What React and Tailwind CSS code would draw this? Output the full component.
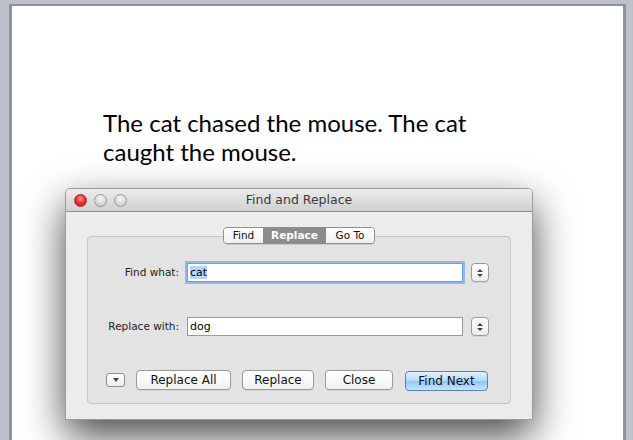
import React from 'react'

const ui = { fontFamily: '"DejaVu Sans", "Liberation Sans", sans-serif' }

function TrafficLight({ red }) {
  return (
    <span
      className={`block h-[13px] w-[13px] rounded-full border ${
        red
          ? 'border-[#b0262a] bg-[radial-gradient(circle_at_50%_35%,#ff9a9a_0%,#f0313a_45%,#c2151c_100%)]'
          : 'border-[#9a9a9a] bg-[radial-gradient(circle_at_50%_35%,#f6f6f6_0%,#d9d9d9_55%,#bdbdbd_100%)]'
      }`}
    />
  )
}

function Stepper() {
  return (
    <button className="flex h-[19px] w-[18px] flex-col items-center justify-center gap-[2px] rounded-[4px] border border-[#9c9c9c] bg-gradient-to-b from-white to-[#ededed] shadow-[0_1px_0_rgba(0,0,0,0.08)]">
      <svg width="6" height="3" viewBox="0 0 6 3"><path d="M0 3 L3 0 L6 3 Z" fill="#444" /></svg>
      <svg width="6" height="3" viewBox="0 0 6 3"><path d="M0 0 L3 3 L6 0 Z" fill="#444" /></svg>
    </button>
  )
}

function PushButton({ children, w, primary }) {
  return (
    <button
      style={ui}
      className={`h-[20px] rounded-[4px] border text-[12px] leading-none text-[#111] ${w} ${
        primary
          ? 'border-[#5b7fb8] bg-[linear-gradient(#e3f1fd_0%,#b3d9fb_50%,#8cc7f7_51%,#c6e6fe_100%)]'
          : 'border-[#9a9a9a] bg-gradient-to-b from-white to-[#f1f1f1] shadow-[0_1px_0_rgba(0,0,0,0.06)]'
      }`}
    >
      {children}
    </button>
  )
}

export default function App() {
  return (
    <div className="relative h-[440px] w-[633px] overflow-hidden bg-[#bcc1cc] pl-[9px] pt-[4px]">
      {/* document page */}
      <div className="h-full w-[617px] border-l-[3px] border-r-[3px] border-t-[2px] border-[#8e939c] bg-white pl-[91px] pt-[102px]">
        <p
          className="w-[400px] text-[24px] leading-[29px] text-black"
          style={{ fontFamily: 'Lato, "Open Sans", sans-serif' }}
        >
          The cat chased the mouse. The cat caught the mouse.
        </p>
      </div>

      {/* Find and Replace window */}
      <div
        style={ui}
        className="absolute left-[65px] top-[188px] flex h-[232px] w-[468px] flex-col overflow-hidden rounded-t-[5px] border border-[#9b9b9b] bg-[#ececec] shadow-[0_16px_40px_rgba(0,0,0,0.72)]"
      >
        <div className="relative flex h-[23px] shrink-0 items-center border-b border-[#8f8f8f] bg-gradient-to-b from-[#ececec] to-[#d0d0d0] px-[8px]">
          <div className="flex gap-[7px]">
            <TrafficLight red />
            <TrafficLight />
            <TrafficLight />
          </div>
          <span className="absolute inset-x-0 text-center text-[12.5px] text-[#3a3a3a]">Find and Replace</span>
        </div>

        <div className="flex flex-1 flex-col px-[21px] pt-[15px]">
          <div className="relative z-10 flex self-center overflow-hidden rounded-[4px] border border-[#8e8e8e] text-[10.5px] leading-none shadow-[0_1px_0_rgba(0,0,0,0.1)]">
            <span className="flex h-[15px] w-[39px] items-center justify-center bg-gradient-to-b from-white to-[#f0f0f0] text-[#111]">Find</span>
            <span className="flex h-[15px] w-[63px] items-center justify-center border-x border-[#8e8e8e] bg-[#8c8c8c] font-bold text-white">Replace</span>
            <span className="flex h-[15px] w-[48px] items-center justify-center bg-gradient-to-b from-white to-[#f0f0f0] text-[#111]">Go To</span>
          </div>

          <div className="-mt-[8px] flex h-[168px] flex-col rounded-[4px] border border-[#c6c6c6] bg-[#e3e3e3] pt-[26px]">
            <div className="flex items-center">
              <span className="w-[91px] text-right text-[10.5px] text-[#222]">Find what:</span>
              <div className="ml-[8px] flex h-[19px] w-[276px] items-center border border-[#6d9fdc] bg-white px-[2px] shadow-[0_0_0_2px_#8fb9ea]">
                <span className="bg-[#b5d5fd] text-[11px] leading-[13px] text-black">cat</span>
              </div>
              <span className="ml-[8px]"><Stepper /></span>
            </div>

            <div className="mt-[35px] flex items-center">
              <span className="w-[91px] text-right text-[10.5px] text-[#222]">Replace with:</span>
              <div className="ml-[8px] flex h-[19px] w-[276px] items-center border border-[#9a9a9a] bg-white px-[2px]">
                <span className="text-[11px] leading-[13px] text-black">dog</span>
              </div>
              <span className="ml-[8px]"><Stepper /></span>
            </div>

            <div className="mt-[32px] flex items-center pl-[18px]">
              <button className="flex h-[14px] w-[19px] items-center justify-center rounded-[3px] border border-[#8e8e8e] bg-gradient-to-b from-white to-[#ececec]">
                <svg width="6" height="4" viewBox="0 0 6 4"><path d="M0 0 L6 0 L3 4 Z" fill="#444" /></svg>
              </button>
              <div className="ml-[11px] flex gap-[11px]">
                <PushButton w="w-[95px]">Replace All</PushButton>
                <PushButton w="w-[72px]">Replace</PushButton>
                <PushButton w="w-[68px]">Close</PushButton>
              </div>
              <div className="ml-[12px]">
                <PushButton w="w-[83px]" primary>Find Next</PushButton>
              </div>
            </div>
          </div>
        </div>
      </div>
    </div>
  )
}
